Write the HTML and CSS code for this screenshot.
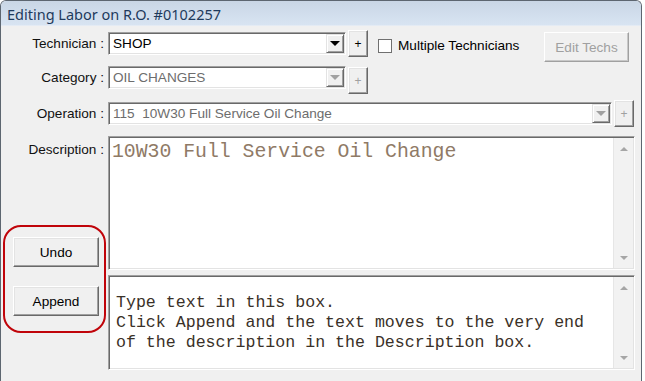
FILE: index.html
```html
<!DOCTYPE html>
<html lang="en">

    <head>
        <meta charset="UTF-8">
        <meta name="viewport" content="width=device-width, initial-scale=1.0">
        <title>Editing Labor</title>
        <link rel="stylesheet" href="styles.css">
    </head>

    <body>
        <div class="window">
            <div class="titlebar">Editing Labor on R.O. #0102257</div>

            <div class="dialog">
                <div class="row row-tech">
                    <label class="field-label">Technician :</label>
                    <div class="combo combo-short">
                        <span class="combo-text">SHOP</span>
                        <span class="drop-btn"><span class="arrow"></span></span>
                    </div>
                    <button class="btn-plus">+</button>
                    <span class="checkbox"></span>
                    <span class="check-label">Multiple Technicians</span>
                    <button class="btn btn-edit" disabled>Edit Techs</button>
                </div>

                <div class="row row-cat">
                    <label class="field-label">Category :</label>
                    <div class="combo combo-short disabled">
                        <span class="combo-text">OIL CHANGES</span>
                        <span class="drop-btn"><span class="arrow"></span></span>
                    </div>
                    <button class="btn-plus disabled">+</button>
                </div>

                <div class="row row-op">
                    <label class="field-label">Operation :</label>
                    <div class="combo combo-long disabled">
                        <span class="combo-text">115  10W30 Full Service Oil Change</span>
                        <span class="drop-btn"><span class="arrow"></span></span>
                    </div>
                    <button class="btn-plus disabled">+</button>
                </div>

                <div class="row row-desc">
                    <div class="side">
                        <label class="field-label desc-label">Description :</label>
                        <div class="marked">
                            <button class="btn btn-side">Undo</button>
                            <button class="btn btn-side">Append</button>
                        </div>
                    </div>
                    <div class="boxes">
                        <div class="textbox desc-box">
                            <div class="text desc-text">10W30 Full Service Oil Change</div>
                            <div class="scrollbar"><span class="up"></span><span class="down"></span></div>
                        </div>
                        <div class="textbox append-box">
                            <div class="text append-text">Type text in this box.
Click Append and the text moves to the very end
of the description in the Description box.</div>
                            <div class="scrollbar"><span class="up"></span><span class="down"></span></div>
                        </div>
                    </div>
                </div>
            </div>
        </div>
    </body>

</html>
```

FILE: styles.css
```css
* {
    box-sizing: border-box;
    margin: 0;
    padding: 0;
}

body {
    background: white;
    font-family: 'Liberation Sans', Arial, sans-serif;
    font-size: 13.6px;
    color: #000;
}

.window {
    width: 642px;
    height: 381px;
    border: 1px solid #5d6670;
    border-bottom: none;
    border-radius: 6px 6px 0 0;
    overflow: hidden;
    background: #f0f0f0;
}

.titlebar {
    height: 25px;
    background: linear-gradient(#c9d6e5, #d8e4f2);
    color: #1e3a5c;
    font-family: 'Noto Sans', 'Open Sans', sans-serif;
    font-size: 14.5px;
    line-height: 26px;
    padding-left: 6px;
    border-bottom: 1px solid #e4ebf4;
}

.dialog {
    padding-top: 4px;
}

.row {
    display: flex;
    align-items: flex-start;
}

.row-tech {
    height: 36px;
}

.row-cat {
    height: 34px;
}

.row-op {
    height: 36px;
}

.field-label {
    width: 107px;
    padding-right: 4px;
    text-align: right;
    line-height: 23px;
    white-space: nowrap;
    color: #111;
}

.row-tech .field-label,
.row-op .field-label {
    margin-top: 2px;
}

/* sunken combo box */
.combo {
    height: 23px;
    display: flex;
    background: white;
    border: 1px solid;
    border-color: #a0a0a0 #fff #fff #a0a0a0;
    box-shadow: inset 1px 1px 0 #696969, inset -1px -1px 0 #e3e3e3;
    padding: 1px;
}

.row-tech .combo,
.row-op .combo {
    margin-top: 2px;
}

.combo-short {
    width: 238px;
}

.combo-long {
    width: 504px;
}

.combo-text {
    flex: 1;
    padding-left: 3px;
    line-height: 19px;
    white-space: pre;
}

.combo.disabled .combo-text {
    color: #6d6d6d;
}

.drop-btn {
    width: 18px;
    height: 19px;
    background: #f0f0f0;
    border: 1px solid;
    border-color: #e3e3e3 #696969 #696969 #e3e3e3;
    box-shadow: inset 1px 1px 0 #fff, inset -1px -1px 0 #a0a0a0;
    display: flex;
    align-items: center;
    justify-content: center;
}

.arrow {
    width: 0;
    height: 0;
    border-left: 5px solid transparent;
    border-right: 5px solid transparent;
    border-top: 5px solid #000;
}

.combo.disabled .arrow {
    border-top-color: #a0a0a0;
}

/* raised buttons */
.btn,
.btn-plus {
    background: #f0f0f0;
    border: 1px solid;
    border-color: #fff #696969 #696969 #fff;
    box-shadow: inset -1px -1px 0 #a0a0a0, inset 1px 1px 0 #e3e3e3;
    font-family: 'Liberation Sans', Arial, sans-serif;
    font-size: 13.6px;
    color: #000;
}

.btn-plus {
    width: 20px;
    height: 27px;
    margin-left: 2px;
    font-size: 12px;
}

.row-cat .btn-plus {
    margin-top: 1px;
}

.btn-plus.disabled {
    color: #a0a0a0;
}

.checkbox {
    width: 14px;
    height: 14px;
    margin: 9px 0 0 10px;
    background: white;
    border: 1px solid #707070;
}

.check-label {
    margin: 0 0 0 6px;
    line-height: 32px;
}

.btn-edit {
    width: 85px;
    height: 30px;
    margin: 2px 0 0 auto;
    margin-right: 12px;
    color: #a0a0a0;
    border-color: #fff #a0a0a0 #a0a0a0 #fff;
    box-shadow: inset -1px -1px 0 #c8c8c8;
}

.side {
    width: 107px;
    display: flex;
    flex-direction: column;
}

.desc-label {
    line-height: 15px;
    margin-top: 6px;
}

/* red marker round the two buttons */
.marked {
    width: 103px;
    margin: 68px 0 0 2px;
    padding: 10px 0 15px 8px;
    border: 2px solid #c0040a;
    border-radius: 18px;
    display: flex;
    flex-direction: column;
    gap: 19px;
}

.btn-side {
    width: 86px;
    height: 30px;
}

.boxes {
    display: flex;
    flex-direction: column;
    gap: 5px;
}

.textbox {
    width: 527px;
    display: flex;
    background: white;
    border: 1px solid;
    border-color: #a0a0a0 #fff #fff #a0a0a0;
    box-shadow: inset 1px 1px 0 #696969, inset -1px -1px 0 #e3e3e3;
    padding: 1px;
}

.desc-box {
    height: 134px;
}

.append-box {
    height: 95px;
}

.text {
    flex: 1;
    font-family: 'Liberation Mono', 'Courier New', monospace;
    white-space: pre;
}

.desc-text {
    font-size: 19.8px;
    color: #8f7a66;
    padding: 3px 0 0 2px;
    line-height: 22px;
}

.append-text {
    font-size: 16.6px;
    color: #3a3128;
    padding: 16px 0 0 6px;
    line-height: 20px;
}

.scrollbar {
    width: 20px;
    background: #f2f2f2;
    border-left: 1px solid #e6e6e6;
    display: flex;
    flex-direction: column;
    justify-content: space-between;
    align-items: center;
    padding: 9px 0 8px;
}

.up {
    border-left: 4px solid transparent;
    border-right: 4px solid transparent;
    border-bottom: 4px solid #a6a6a6;
}

.down {
    border-left: 4px solid transparent;
    border-right: 4px solid transparent;
    border-top: 4px solid #a6a6a6;
}
```
